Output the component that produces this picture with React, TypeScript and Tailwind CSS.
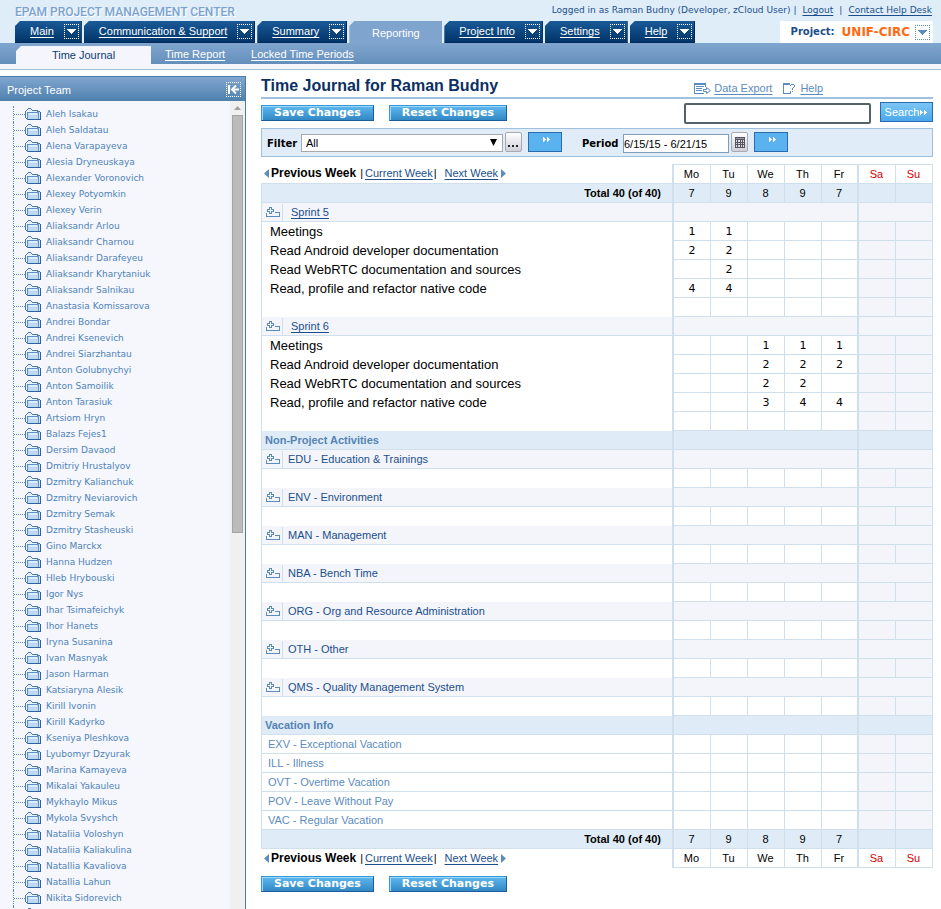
import React from "react";

const SANS = "font-['Liberation_Sans',Arial,sans-serif]";
const WIDE = "font-['DejaVu_Sans',Verdana,sans-serif]";

const people = [
  "Aleh Isakau", "Aleh Saldatau", "Alena Varapayeva", "Alesia Dryneuskaya", "Alexander Voronovich",
  "Alexey Potyomkin", "Alexey Verin", "Aliaksandr Arlou", "Aliaksandr Charnou", "Aliaksandr Darafeyeu",
  "Aliaksandr Kharytaniuk", "Aliaksandr Salnikau", "Anastasia Komissarova", "Andrei Bondar",
  "Andrei Ksenevich", "Andrei Siarzhantau", "Anton Golubnychyi", "Anton Samoilik", "Anton Tarasiuk",
  "Artsiom Hryn", "Balazs Fejes1", "Dersim Davaod", "Dmitriy Hrustalyov", "Dzmitry Kalianchuk",
  "Dzmitry Neviarovich", "Dzmitry Semak", "Dzmitry Stasheuski", "Gino Marckx", "Hanna Hudzen",
  "Hleb Hrybouski", "Igor Nys", "Ihar Tsimafeichyk", "Ihor Hanets", "Iryna Susanina", "Ivan Masnyak",
  "Jason Harman", "Katsiaryna Alesik", "Kirill Ivonin", "Kirill Kadyrko", "Kseniya Pleshkova",
  "Lyubomyr Dzyurak", "Marina Kamayeva", "Mikalai Yakauleu", "Mykhaylo Mikus", "Mykola Svyshch",
  "Nataliia Voloshyn", "Nataliia Kaliakulina", "Natallia Kavaliova", "Natallia Lahun",
  "Nikita Sidorevich",
];

type Task = { name: string; hours: string[] };

const sprints: { name: string; tasks: Task[] }[] = [
  {
    name: "Sprint 5",
    tasks: [
      { name: "Meetings", hours: ["1", "1", "", "", ""] },
      { name: "Read Android developer documentation", hours: ["2", "2", "", "", ""] },
      { name: "Read WebRTC documentation and sources", hours: ["", "2", "", "", ""] },
      { name: "Read, profile and refactor native code", hours: ["4", "4", "", "", ""] },
    ],
  },
  {
    name: "Sprint 6",
    tasks: [
      { name: "Meetings", hours: ["", "", "1", "1", "1"] },
      { name: "Read Android developer documentation", hours: ["", "", "2", "2", "2"] },
      { name: "Read WebRTC documentation and sources", hours: ["", "", "2", "2", ""] },
      { name: "Read, profile and refactor native code", hours: ["", "", "3", "4", "4"] },
    ],
  },
];

const activities = [
  "EDU - Education & Trainings", "ENV - Environment", "MAN - Management", "NBA - Bench Time",
  "ORG - Org and Resource Administration", "OTH - Other", "QMS - Quality Management System",
];

const vacations = [
  "EXV - Exceptional Vacation", "ILL - Illness", "OVT - Overtime Vacation",
  "POV - Leave Without Pay", "VAC - Regular Vacation",
];

const days = ["Mo", "Tu", "We", "Th", "Fr", "Sa", "Su"];
const totals = ["7", "9", "8", "9", "7", "", ""];
const blank = ["", "", "", "", ""];

function DropBox({ label, blue = false }: { label: string; blue?: boolean }) {
  return (
    <button
      type="button"
      aria-label={label}
      className={`flex h-[15px] w-[15px] shrink-0 items-center justify-center border border-dotted ${
        blue ? "border-[#5c8cbe] text-[#5c8cbe]" : "border-white text-white"
      }`}
    >
      <svg width="9" height="5" viewBox="0 0 9 5" fill="currentColor" shapeRendering="crispEdges" aria-hidden="true">
        <path d="M0 0h9v1H8v1H7v1H6v1H5v1H4V4H3V3H2V2H1V1H0z" />
      </svg>
    </button>
  );
}

function NavTab({ label }: { label: string }) {
  return (
    <div className="flex h-[22px] items-start gap-[10px] border-r border-b border-[#00285a] bg-linear-to-b from-[#1a5a98] to-[#023569] pt-[3px] pr-[2px] pl-[15px] [clip-path:polygon(5px_0,100%_0,100%_100%,0_100%,0_5px)]">
      <a href="#" className="text-[11px] leading-[14px] whitespace-nowrap text-white underline underline-offset-2">
        {label}
      </a>
      <DropBox label={`${label} menu`} />
    </div>
  );
}

function Folder() {
  return (
    <svg width="16" height="12" viewBox="0 0 16 12" shapeRendering="crispEdges" className="shrink-0" aria-hidden="true">
      <path d="M1 2h1V1h1V0h3v1h1v1h6v1h2v1h1v8H2v-1H1v-1H0V3h1z" fill="#4a7ab4" />
      <path d="M2 2h1V1h3v1h1v1h5v1H2v6H1V3h1z" fill="#e8f2fc" />
      <path d="M3 5h10v6H3z" fill="#bcd8f2" />
      <path d="M4 5h8v2H4z" fill="#dcecfb" />
      <path d="M2 4h12v7h-1V5H3v6H2z" fill="#5f90c8" />
      <path d="M14 4h1v7h-1z" fill="#d4e6f8" />
      <path d="M15 4h1v8H3v-1h12z" fill="#2f5f9d" />
    </svg>
  );
}

function ExpandIcon() {
  return (
    <svg width="14" height="10" viewBox="0 0 14 10" fill="#5c8cbe" shapeRendering="crispEdges" aria-hidden="true">
      <path fillRule="evenodd" d="M3 0h3v2h2v3H6v2H3V5H1V2h2zM4 1v2H2v1h2v2h1V4h2V3H5V1z" />
      <path d="M0 6h1v3h12V6H9V5h5v5H0z" />
    </svg>
  );
}

function DoubleArrow() {
  return (
    <svg width="8" height="5" viewBox="0 0 8 5" fill="#fff" shapeRendering="crispEdges" aria-hidden="true">
      <path d="M0 0h1v1h1v1h1v1H2v1H1v1H0zM4 0h1v1h1v1h1v1H6v1H5v1H4z" />
    </svg>
  );
}

function GlossButton({ children }: { children: React.ReactNode }) {
  return (
    <button
      type="button"
      className={`${WIDE} h-4 border border-t-[#3a97d6] border-r-[#1c5c9a] border-b-[#1c5c9a] border-l-[#3a97d6] bg-linear-to-b from-[#5fb8ef] to-[#3288c4] px-3 text-[11px] leading-[14px] font-bold whitespace-nowrap text-white shadow-[inset_1px_1px_0_#9ad8fa]`}
    >
      {children}
    </button>
  );
}

function GoButton({ label }: { label: string }) {
  return (
    <button
      type="button"
      aria-label={label}
      className="flex h-5 w-[34px] shrink-0 justify-center border border-[#2a6aae] bg-[#5ab2ef] pt-[4px] pl-1"
    >
      <DoubleArrow />
    </button>
  );
}

function FormButtons() {
  return (
    <div className="flex gap-[15px]">
      <GlossButton>Save Changes</GlossButton>
      <GlossButton>Reset Changes</GlossButton>
    </div>
  );
}

function WeekNav() {
  return (
    <div className="flex h-[18px] items-center pl-[3px] text-[11px] leading-[14px] whitespace-nowrap">
      <svg width="5" height="9" viewBox="0 0 5 9" className="mr-[2px]" fill="#5c8cbe" aria-hidden="true">
        <path d="M5 0v9L0 4.500z" />
      </svg>
      <b className="text-[12px]">Previous Week</b>
      <span className="mr-[2px] ml-1">|</span>
      <a href="#" className="text-[#1a4f8b] underline underline-offset-2">Current Week</a>
      <span className="mr-2 ml-px">|</span>
      <a href="#" className="text-[#1a4f8b] underline underline-offset-2">Next Week</a>
      <svg width="5" height="9" viewBox="0 0 5 9" className="ml-[3px]" fill="#5c8cbe" aria-hidden="true">
        <path d="M0 0v9l5-4.500z" />
      </svg>
    </div>
  );
}

const LINE = "border-[#cfdfeb]";

function dayEdge(i: number) {
  if (i === 0 || i === 5) return "border-l-2";
  if (i === 6) return "border-l border-r";
  return "border-l";
}

function DayCells({ values, tone }: { values: string[]; tone: "plain" | "total" | "task" }) {
  return (
    <>
      {days.map((d, i) => (
        <td
          key={d}
          className={`h-[19px] border-b p-0 text-center text-[11px] leading-[16px] ${LINE} ${dayEdge(i)} ${
            tone === "total" ? "bg-[#dfecf7]" : i > 4 ? "bg-[#f4f5fb]" : "bg-white"
          } ${tone === "task" ? `${WIDE} pt-[2px]` : "pr-px"}`}
        >
          {values[i] ?? ""}
        </td>
      ))}
    </>
  );
}

function BandCells({ blue = false }: { blue?: boolean }) {
  const bg = blue ? "bg-[#dfecf7]" : "bg-[#f4f5fb]";
  return (
    <>
      <td colSpan={5} className={`h-[19px] border-b border-l-2 p-0 ${LINE} ${bg}`} />
      <td colSpan={2} className={`h-[19px] border-r border-b border-l-2 p-0 ${LINE} ${bg}`} />
    </>
  );
}

function GroupRow({ label, link = false }: { label: string; link?: boolean }) {
  return (
    <tr>
      <td className={`h-[19px] border-b border-l bg-[#f4f5fb] p-0 ${LINE}`}>
        <div className="flex h-[18px] items-center">
          <button
            type="button"
            aria-label={`Expand ${label}`}
            className={`flex h-[17px] w-[21px] items-center justify-end border-r pr-[2px] ${LINE}`}
          >
            <ExpandIcon />
          </button>
          {link ? (
            <a href="#" className="ml-2 text-[11px] leading-[16px] text-[#1a4f8b] underline underline-offset-2">{label}</a>
          ) : (
            <span className="ml-[5px] text-[11px] leading-[16px] text-[#1a4f8b]">{label}</span>
          )}
        </div>
      </td>
      <BandCells />
    </tr>
  );
}

function TaskRow({ task }: { task: Task }) {
  return (
    <tr>
      <td className={`h-[19px] border-l bg-white py-0 pr-0 pl-2 text-[13px] leading-[18px] whitespace-nowrap text-black ${LINE}`}>
        {task.name}
      </td>
      <DayCells values={task.hours} tone="task" />
    </tr>
  );
}

function SectionRow({ label }: { label: string }) {
  return (
    <tr>
      <td className={`h-[19px] border-b border-l bg-[#dfecf7] py-0 pr-0 pl-[3px] text-[11px] leading-[18px] font-bold text-[#5583b3] ${LINE}`}>
        {label}
      </td>
      <BandCells blue />
    </tr>
  );
}

function TotalRow() {
  return (
    <tr>
      <td className={`h-[19px] border-b border-l bg-[#dfecf7] py-0 pr-[11px] pl-0 text-right text-[11px] leading-[18px] font-bold ${LINE}`}>
        Total 40 (of 40)
      </td>
      <DayCells values={totals} tone="total" />
    </tr>
  );
}

function DayNames({ top = false }: { top?: boolean }) {
  return (
    <>
      {days.map((d, i) => (
        <th
          key={d}
          scope="col"
          className={`border-b bg-white p-0 pr-px text-center text-[11px] leading-[16px] font-normal ${LINE} ${dayEdge(i)} ${
            top ? "h-5 border-t" : "h-[19px]"
          } ${i > 4 ? "text-[#d40000]" : "text-black"}`}
        >
          {d}
        </th>
      ))}
    </>
  );
}

function Header() {
  return (
    <header>
      <div className="flex h-[21px] items-start justify-between bg-[#dfedf8] pr-[9px] pl-[15px]">
        <div className="pt-[3px] font-[Roboto,sans-serif] text-[12px] leading-[18px] font-medium whitespace-nowrap text-[#7ba3cf] [text-shadow:1px_1px_0_#fff]">
          EPAM PROJECT MANAGEMENT CENTER
        </div>
        <div className={`${WIDE} flex pt-[3px] text-[9px] leading-[14px] whitespace-nowrap text-[#1a4f8b]`}>
          <span>Logged in as Raman Budny (Developer, zCloud User)</span>
          <span className="ml-[3px]">|</span>
          <a href="#" className="ml-[6px] underline underline-offset-2">Logout</a>
          <span className="mx-[6px]">|</span>
          <a href="#" className="underline underline-offset-2">Contact Help Desk</a>
        </div>
      </div>
      <div className="flex h-[22px] justify-between bg-[#dfedf8] pr-2 pl-[15px]">
        <nav className="flex gap-[2px]">
          <NavTab label="Main" />
          <NavTab label="Communication &amp; Support" />
          <NavTab label="Summary" />
          <div className="flex w-[93px] items-center justify-center bg-[#7fa5cf] pt-[2px] text-[11px] leading-[14px] text-white [clip-path:polygon(5px_0,100%_0,100%_100%,0_100%,0_5px)]">
            Reporting
          </div>
          <NavTab label="Project Info" />
          <NavTab label="Settings" />
          <NavTab label="Help" />
        </nav>
        <div className={`${WIDE} flex items-center bg-white pr-[3px] pl-[11px] whitespace-nowrap`}>
          <span className="text-[10px] leading-[14px] font-bold text-[#1a4f8b]">Project:</span>
          <span className="mr-[5px] ml-[7px] text-[12px] leading-[16px] font-bold text-[#ff6a10]">UNIF-CIRC</span>
          <DropBox label="Choose project" blue />
        </div>
      </div>
      <div className="flex h-[21px] items-end bg-linear-to-b from-[#80a6cf] to-[#648fbb] pl-4 text-[11px]">
        <div className="flex h-[18px] w-[135px] items-center justify-center bg-[#f5f6fd] text-[#0f3a72] [clip-path:polygon(5px_0,100%_0,100%_100%,0_100%,0_5px)]">
          Time Journal
        </div>
        <a href="#" className="ml-[14px] h-[17px] leading-[14px] whitespace-nowrap text-white underline underline-offset-2">Time Report</a>
        <a href="#" className="ml-[26px] h-[17px] leading-[14px] whitespace-nowrap text-white underline underline-offset-2">Locked Time Periods</a>
      </div>
      <div className="h-[6px] border-b border-[#a0bcd8] bg-[#f5f6fd]" />
    </header>
  );
}

function TreeNode({ children }: { children?: React.ReactNode }) {
  return (
    <li className="flex h-4 items-center border-l border-dotted border-[#5c8cbe]">
      <span className="w-[11px] shrink-0 border-t border-dotted border-[#5c8cbe]" />
      <Folder />
      {children}
    </li>
  );
}

function Sidebar() {
  return (
    <aside className="flex w-[246px] shrink-0 flex-col border-t border-r border-[#4a7dad] bg-[#f5f7fd]">
      <div className="flex h-6 shrink-0 items-center justify-between bg-linear-to-b from-[#80a6cf] to-[#4e80ae] pr-1 pl-[7px]">
        <h2 className="pt-[2px] text-[11px] leading-[14px] text-white">Project Team</h2>
        <button type="button" aria-label="Collapse panel" className="flex h-[15px] w-[15px] items-center justify-center border border-dotted border-white">
          <svg width="11" height="9" viewBox="0 0 11 9" fill="none" stroke="#fff" strokeWidth="2" aria-hidden="true">
            <path d="M1 0v9M11 4.500H4M8 .5l-4 4 4 4" />
          </svg>
        </button>
      </div>
      <div className="flex min-h-0 flex-1">
        <ul className="ml-[13px] flex-1 overflow-hidden pt-[5px]">
          {people.map((p) => (
            <TreeNode key={p}>
              <a href="#" className={`${WIDE} ml-[5px] text-[9px] leading-[14px] whitespace-nowrap text-[#4f82b8]`}>{p}</a>
            </TreeNode>
          ))}
          <TreeNode />
        </ul>
        <div className="flex w-[15px] shrink-0 flex-col items-center bg-[#f0f0f0] pt-[5px]">
          <svg width="7" height="4" viewBox="0 0 7 4" fill="#a0a0a0" aria-hidden="true">
            <path d="M3.500 0L7 4H0z" />
          </svg>
          <div className="mt-[5px] h-[52%] w-[11px] border border-[#a5a5a5] bg-[#bbbbbb]" />
        </div>
      </div>
    </aside>
  );
}

function FilterBar() {
  return (
    <div className="mt-1 flex h-[29px] items-start border border-[#9fc0df] bg-[#e0edf8] pt-[3px] pl-[5px] text-[11px] text-black">
      <label htmlFor="filter" className={`${WIDE} w-[34px] pt-[5px] text-[10px] leading-[14px] font-bold`}>Filter</label>
      <div className="relative mt-[2px] w-[202px]">
        <select id="filter" className="h-[18px] w-full appearance-none border border-[#a8a8a8] bg-white pl-1 text-[11px] leading-[16px] text-black">
          <option>All</option>
        </select>
        <svg width="7" height="7" viewBox="0 0 7 7" className="pointer-events-none absolute top-[5px] right-[6px]" aria-hidden="true">
          <path d="M0 0h7L3.500 7z" />
        </svg>
      </div>
      <button
        type="button"
        aria-label="Choose filter"
        className="ml-[2px] flex h-5 w-[17px] items-end justify-center rounded-xs border border-[#a9a9b2] bg-linear-to-b from-white to-[#cfcfda] pb-[4px]"
      >
        <svg width="11" height="2" viewBox="0 0 11 2" shapeRendering="crispEdges" aria-hidden="true">
          <path d="M0 0h2v2H0zM4 0h2v2H4zM8 0h2v2H8z" fill="#222" />
        </svg>
      </button>
      <div className="ml-[6px]">
        <GoButton label="Apply filter" />
      </div>
      <label htmlFor="period" className={`${WIDE} ml-5 w-[41px] pt-[5px] text-[10px] leading-[14px] font-bold`}>Period</label>
      <input
        id="period"
        type="text"
        defaultValue="6/15/15 - 6/21/15"
        className="mt-[2px] h-[19px] w-[106px] border border-[#7f9db9] bg-white text-[11px] leading-[14px]"
      />
      <button
        type="button"
        aria-label="Open calendar"
        className="ml-[2px] flex h-5 w-[17px] items-center justify-center rounded-xs border border-[#a9a9b2] bg-linear-to-b from-white to-[#cfcfda]"
      >
        <svg width="10" height="11" viewBox="0 0 10 11" shapeRendering="crispEdges" aria-hidden="true">
          <path d="M0 0h10v11H0z" fill="#55565f" />
          <path d="M1 1h8v1H1z" fill="#9a9aa6" />
          <path d="M1 3h1v2H1zM3 3h2v2H3zM6 3h1v2H6zM8 3h1v2H8zM1 6h1v1H1zM3 6h2v1H3zM6 6h1v1H6zM8 6h1v1H8zM1 8h1v2H1zM3 8h2v2H3zM6 8h1v2H6zM8 8h1v2H8z" fill="#dcdce4" />
        </svg>
      </button>
      <div className="ml-[6px]">
        <GoButton label="Apply period" />
      </div>
    </div>
  );
}

function Journal() {
  return (
    <table className="mt-[7px] w-full table-fixed border-separate border-spacing-0 text-black">
      <colgroup>
        <col />
        <col className="w-[38px]" />
        <col className="w-[37px]" />
        <col className="w-[37px]" />
        <col className="w-[37px]" />
        <col className="w-[36px]" />
        <col className="w-[38px]" />
        <col className="w-[38px]" />
      </colgroup>
      <thead>
        <tr>
          <td className={`h-5 border-b p-0 align-top ${LINE}`}><WeekNav /></td>
          <DayNames top />
        </tr>
      </thead>
      <tbody>
        <TotalRow />
        {sprints.map((s) => (
          <React.Fragment key={s.name}>
            <GroupRow label={s.name} link />
            {s.tasks.map((t) => <TaskRow key={t.name} task={t} />)}
            <TaskRow task={{ name: "", hours: blank }} />
          </React.Fragment>
        ))}
        <SectionRow label="Non-Project Activities" />
        {activities.map((a) => (
          <React.Fragment key={a}>
            <GroupRow label={a} />
            <TaskRow task={{ name: "", hours: blank }} />
          </React.Fragment>
        ))}
        <SectionRow label="Vacation Info" />
        {vacations.map((v) => (
          <tr key={v}>
            <td className={`h-[19px] border-b border-l py-0 pr-0 pl-[6px] text-[11px] leading-[18px] text-[#5c8cbe] ${LINE}`}>{v}</td>
            <DayCells values={blank} tone="plain" />
          </tr>
        ))}
        <TotalRow />
        <tr>
          <td className="h-[19px] p-0 align-top"><WeekNav /></td>
          <DayNames />
        </tr>
      </tbody>
    </table>
  );
}

export default function App() {
  return (
    <div className={`${SANS} flex h-screen flex-col overflow-hidden bg-white`}>
      <Header />
      <div className="flex min-h-0 flex-1 pt-[6px]">
        <Sidebar />
        <main className="min-w-0 flex-1 pr-2 pl-[15px]">
          <div className="flex h-[23px] items-start justify-between border-b-2 border-[#9fc0df]">
            <h1 className="text-[16px] leading-[20px] font-bold whitespace-nowrap text-[#0b2f63]">Time Journal for Raman Budny</h1>
            <div className="mr-[110px] flex items-center pt-[5px] text-[11px] leading-[14px] text-[#5c8cbe]">
              <svg width="17" height="11" viewBox="0 0 17 11" fill="none" stroke="#5c8cbe" shapeRendering="crispEdges" aria-hidden="true">
                <path d="M11.500 4V.5H.5v10h9M2 3.500h8M2 5.500h6M2 7.500h6M0 1.500h12" />
                <path d="M9.500 6.500h3v-2l4 3-4 3v-2h-3z" shapeRendering="auto" />
              </svg>
              <a href="#" className="ml-[3px] underline underline-offset-2">Data Export</a>
              <svg width="13" height="11" viewBox="0 0 13 11" fill="#5c8cbe" shapeRendering="crispEdges" className="ml-[11px]" aria-hidden="true">
                <path d="M0 0h7v2H1v8h6V8h1v3H0z" />
                <path d="M8 1h3v1H8zM7 2h1v1H7zM11 2h1v2h-1zM10 4h1v1h-1zM9 5h1v2H9zM9 8h1v1H9z" />
              </svg>
              <a href="#" className="ml-1 underline underline-offset-2">Help</a>
            </div>
          </div>
          <div className="flex justify-between pt-[3px]">
            <div className="pt-[3px]"><FormButtons /></div>
            <div className="flex items-start">
              <input
                type="text"
                aria-label="Search"
                autoFocus
                className="mt-[1px] h-[21px] w-[187px] rounded-xs border-2 border-[#56626a] bg-white px-[1px] text-[12px] outline-none"
              />
              <button type="button" className="ml-[9px] flex h-5 w-[53px] items-center justify-center gap-px border border-[#2a6aae] bg-linear-to-b from-[#7cc6f5] to-[#4aa8ea] text-[11px] leading-[14px] text-white">
                Search
                <DoubleArrow />
              </button>
            </div>
          </div>
          <FilterBar />
          <Journal />
          <div className="pt-[8px]"><FormButtons /></div>
        </main>
      </div>
    </div>
  );
}
